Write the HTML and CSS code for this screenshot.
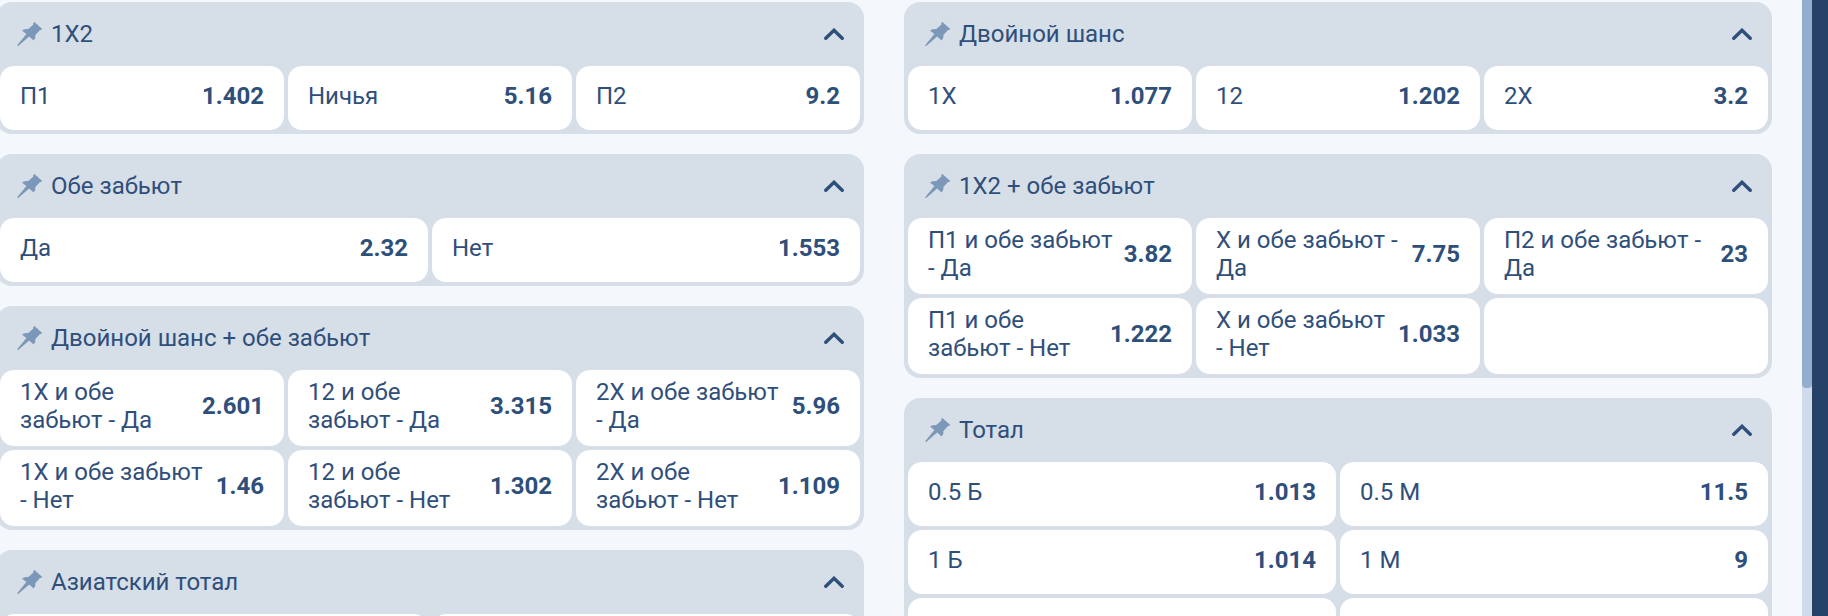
FILE: index.html
```
<!DOCTYPE html>
<html lang="ru">
<head>
    <meta charset="UTF-8">
    <meta name="viewport" content="width=device-width, initial-scale=1">
    <title>Ставки</title>
    <link rel="stylesheet" href="styles.css">
</head>
<body>
    <svg class="sprite">
        <symbol id="pin" viewBox="0 0 26 26">
            <path d="M17.4 1 L25 7.8 Q25 9.2 23 9 L18.4 14 Q19 17.2 16.6 19.4 L12.2 15.6 L1.2 25 Q0 25.2 0.4 24 L9.4 13 L5 9.6 Q7.4 7.6 11 8.2 L16.2 3.8 Q15.9 1.4 17.4 1 Z"/>
        </symbol>
        <symbol id="arrow" viewBox="0 0 20 12">
            <path d="M1.8 10.2 L10 2.3 L18.2 10.2"/>
        </symbol>
    </svg>

    <div class="page">
        <div class="markets">
            <div class="column">
                <div class="market">
                    <div class="header">
                        <svg class="pin"><use href="#pin"/></svg>
                        <span class="title">1X2</span>
                        <svg class="arrow"><use href="#arrow"/></svg>
                    </div>
                    <div class="grid three">
                        <div class="cell"><span>П1</span><b>1.402</b></div>
                        <div class="cell"><span>Ничья</span><b>5.16</b></div>
                        <div class="cell"><span>П2</span><b>9.2</b></div>
                    </div>
                </div>

                <div class="market">
                    <div class="header">
                        <svg class="pin"><use href="#pin"/></svg>
                        <span class="title">Обе забьют</span>
                        <svg class="arrow"><use href="#arrow"/></svg>
                    </div>
                    <div class="grid two">
                        <div class="cell"><span>Да</span><b>2.32</b></div>
                        <div class="cell"><span>Нет</span><b>1.553</b></div>
                    </div>
                </div>

                <div class="market">
                    <div class="header">
                        <svg class="pin"><use href="#pin"/></svg>
                        <span class="title">Двойной шанс + обе забьют</span>
                        <svg class="arrow"><use href="#arrow"/></svg>
                    </div>
                    <div class="grid three">
                        <div class="cell"><span>1X и обе забьют - Да</span><b>2.601</b></div>
                        <div class="cell"><span>12 и обе забьют - Да</span><b>3.315</b></div>
                        <div class="cell"><span>2X и обе забьют - Да</span><b>5.96</b></div>
                        <div class="cell"><span>1X и обе забьют - Нет</span><b>1.46</b></div>
                        <div class="cell"><span>12 и обе забьют - Нет</span><b>1.302</b></div>
                        <div class="cell"><span>2X и обе забьют - Нет</span><b>1.109</b></div>
                    </div>
                </div>

                <div class="market">
                    <div class="header">
                        <svg class="pin"><use href="#pin"/></svg>
                        <span class="title">Азиатский тотал</span>
                        <svg class="arrow"><use href="#arrow"/></svg>
                    </div>
                    <div class="grid two">
                        <div class="cell"></div>
                        <div class="cell"></div>
                    </div>
                </div>
            </div>

            <div class="column">
                <div class="market">
                    <div class="header">
                        <svg class="pin"><use href="#pin"/></svg>
                        <span class="title">Двойной шанс</span>
                        <svg class="arrow"><use href="#arrow"/></svg>
                    </div>
                    <div class="grid three">
                        <div class="cell"><span>1X</span><b>1.077</b></div>
                        <div class="cell"><span>12</span><b>1.202</b></div>
                        <div class="cell"><span>2X</span><b>3.2</b></div>
                    </div>
                </div>

                <div class="market">
                    <div class="header">
                        <svg class="pin"><use href="#pin"/></svg>
                        <span class="title">1X2 + обе забьют</span>
                        <svg class="arrow"><use href="#arrow"/></svg>
                    </div>
                    <div class="grid three">
                        <div class="cell"><span>П1 и обе забьют - Да</span><b>3.82</b></div>
                        <div class="cell"><span>X и обе забьют - Да</span><b>7.75</b></div>
                        <div class="cell"><span>П2 и обе забьют - Да</span><b>23</b></div>
                        <div class="cell"><span>П1 и обе забьют - Нет</span><b>1.222</b></div>
                        <div class="cell"><span>X и обе забьют - Нет</span><b>1.033</b></div>
                        <div class="cell"></div>
                    </div>
                </div>

                <div class="market">
                    <div class="header">
                        <svg class="pin"><use href="#pin"/></svg>
                        <span class="title">Тотал</span>
                        <svg class="arrow"><use href="#arrow"/></svg>
                    </div>
                    <div class="grid two">
                        <div class="cell"><span>0.5 Б</span><b>1.013</b></div>
                        <div class="cell"><span>0.5 М</span><b>11.5</b></div>
                        <div class="cell"><span>1 Б</span><b>1.014</b></div>
                        <div class="cell"><span>1 М</span><b>9</b></div>
                        <div class="cell"></div>
                        <div class="cell"></div>
                    </div>
                </div>
            </div>
        </div>

        <div class="scrollbar"><div class="thumb"></div></div>
        <div class="side"></div>
    </div>
</body>
</html>
```
FILE: styles.css
```
* {
    box-sizing: border-box;
    margin: 0;
    padding: 0;
}

body {
    background: #f4f7fc;
    color: #2f4f7b;
    font-family: Roboto, sans-serif;
    font-size: 24px;
    line-height: 28px;
    overflow: hidden;
}

.sprite {
    display: none;
}

.page {
    display: flex;
    height: 616px;
    overflow: hidden;
}

.markets {
    display: flex;
    align-items: flex-start;
    gap: 40px;
    width: 1802px;
    margin-left: -4px;
    padding-top: 2px;
    flex: 1;
}

.column {
    display: flex;
    flex-direction: column;
    gap: 20px;
    width: 868px;
}

.market {
    background: #d6dee8;
    border-radius: 16px;
    padding: 0 4px 4px;
}

.header {
    display: flex;
    align-items: center;
    height: 64px;
    padding: 0 16px 0 17px;
}

.pin {
    width: 26px;
    height: 26px;
    margin-right: 8px;
    fill: #7b98b8;
}

.title {
    flex: 1;
}

.arrow {
    width: 20px;
    height: 12px;
    fill: none;
    stroke: #2f4f7b;
    stroke-width: 3.4;
    stroke-linecap: round;
    stroke-linejoin: miter;
}

.grid {
    display: grid;
    gap: 4px;
}

.three {
    grid-template-columns: repeat(3, 1fr);
}

.two {
    grid-template-columns: repeat(2, 1fr);
}

.cell {
    display: flex;
    align-items: center;
    justify-content: space-between;
    gap: 8px;
    min-height: 64px;
    padding: 8px 20px 12px;
    background: #fff;
    border-radius: 14px;
}

.cell b {
    font-weight: 700;
}

.scrollbar {
    width: 10px;
    background: #cfdbea;
}

.thumb {
    height: 388px;
    background: #94aecf;
    border-radius: 0 0 4px 4px;
}

.side {
    width: 16px;
    background: #264268;
}
```
